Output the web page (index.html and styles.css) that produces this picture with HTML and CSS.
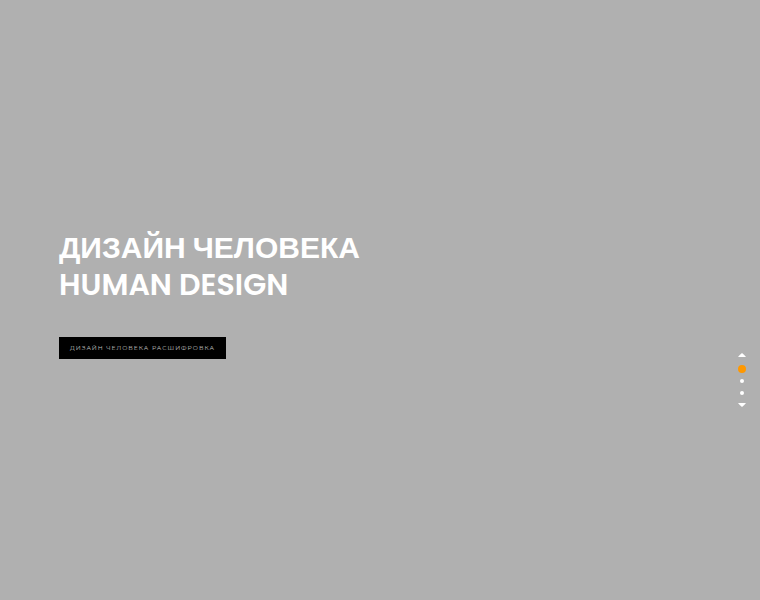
FILE: index.html
```html
<!DOCTYPE html>
<html lang="ru">
<head>
  <meta charset="UTF-8">
  <meta name="viewport" content="width=device-width, initial-scale=1.0">
  <title>Дизайн человека</title>
  <link rel="stylesheet" href="styles.css">
</head>
<body>
  <main class="hero">
    <h1>ДИЗАЙН ЧЕЛОВЕКА<br>HUMAN DESIGN</h1>
    <a class="hero-button" href="#decode">ДИЗАЙН ЧЕЛОВЕКА РАСШИФРОВКА</a>
  </main>

  <nav class="slide-nav" aria-label="Слайды">
    <button type="button" class="arrow" aria-label="Предыдущий слайд">
      <svg viewBox="0 0 8 4"><path d="M0 4 Q1 2.5 4 0 Q7 2.5 8 4 Z"/></svg>
    </button>
    <button type="button" class="dot active" aria-label="Слайд 1"></button>
    <button type="button" class="dot" aria-label="Слайд 2"></button>
    <button type="button" class="dot" aria-label="Слайд 3"></button>
    <button type="button" class="arrow" aria-label="Следующий слайд">
      <svg viewBox="0 0 8 4"><path d="M0 0 Q1 1.5 4 4 Q7 1.5 8 0 Z"/></svg>
    </button>
  </nav>
</body>
</html>
```
FILE: styles.css
```css
body {
  margin: 0;
  background-color: #b0b0b0;
  color: #fff;
  font-family: "Liberation Sans", Arial, sans-serif;
}
.hero {
  min-height: 100vh;
  box-sizing: border-box;
  padding: 0 59px 12px;
  display: flex;
  flex-direction: column;
  justify-content: center;
  align-items: flex-start;
}
h1 {
  margin: 0 0 34px;
  font-family: Poppins, "Liberation Sans", sans-serif;
  font-size: 30px;
  line-height: 37px;
  font-weight: 600;
}
.hero-button {
  padding: 0 11px;
  background-color: #000;
  color: #c0c0c0;
  font-family: Montserrat, "Liberation Sans", sans-serif;
  font-size: 6px;
  font-weight: 400;
  line-height: 22px;
  letter-spacing: 1px;
  text-decoration: none;
}

/* slide switcher on the right edge */
.slide-nav {
  position: fixed;
  top: 349px;
  right: 14px;
  display: flex;
  flex-direction: column;
  align-items: center;
}
.slide-nav button {
  padding: 0;
  border: 0;
  background: none;
  cursor: pointer;
}
.arrow {
  width: 8px;
  height: 12px;
  display: flex;
  align-items: center;
}
.arrow svg {
  width: 8px;
  height: 4px;
  fill: #fff;
}
.slide-nav .dot {
  width: 4px;
  height: 4px;
  margin: 4px 0;
  border-radius: 50%;
  background-color: #fff;
}
.slide-nav .active {
  width: 8px;
  height: 8px;
  margin-bottom: 2px;
  background-color: #ff9800;
}
```
